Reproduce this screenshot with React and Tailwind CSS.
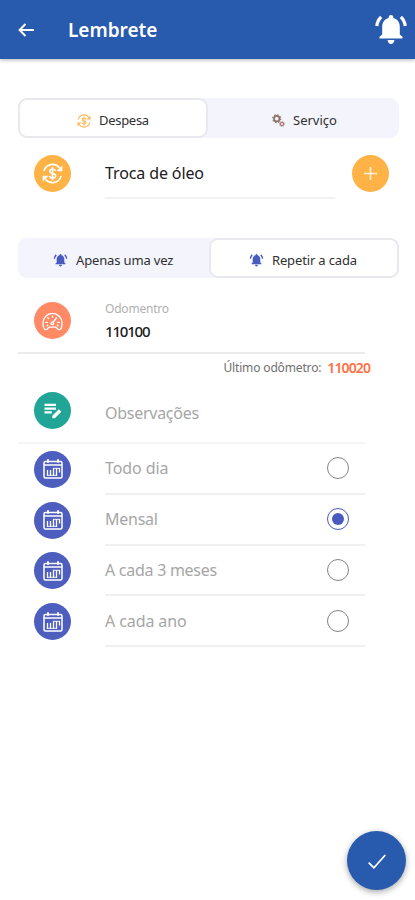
import { useState } from "react";
import clsx from "clsx";

function BellIcon({ className }) {
  return (
    <svg viewBox="0 0 32 30" className={className} fill="currentColor">
      <path d="M16 0c1.400 0 2.300.9 2.300 2.200v.7c4.200 1 6.500 4.500 6.500 9v7.600l2.700 2.300v1.800H4.500v-1.800l2.700-2.300v-7.600c0-4.500 2.300-8 6.500-9v-.7C13.700.9 14.600 0 16 0z" />
      <path d="M12.600 25h6.800c0 2.300-1.500 4-3.400 4s-3.400-1.700-3.400-4z" />
      <path d="M6.200 2C3.600 4.300 2.200 7.200 1.800 11M25.800 2c2.600 2.300 4 5.200 4.400 9" fill="none" stroke="currentColor" strokeWidth="3.200" />
    </svg>
  );
}

function MoneyCycleIcon({ className }) {
  return (
    <svg viewBox="0 0 22 22" className={className} fill="none" stroke="currentColor" strokeWidth="1.700">
      <path d="M2 8.500A9.300 9.300 0 0 1 18.300 5M20 13.500A9.300 9.300 0 0 1 3.700 17" />
      <path d="M21.300 2.500v6.200h-6.200zM.7 19.500v-6.200h6.200z" fill="currentColor" stroke="none" />
      <path d="M14.200 8.300c-.4-1.200-1.500-1.800-3.100-1.800-1.800 0-3 .8-3 2.100 0 3.100 6.200 1.600 6.200 4.800 0 1.400-1.400 2.200-3.200 2.200s-3-.7-3.300-2M11 4v14" />
    </svg>
  );
}

function GearsIcon({ className }) {
  return (
    <svg viewBox="0 0 12 12" className={className} fill="none">
      <circle cx="4.400" cy="4.300" r="2.500" stroke="#8d6e63" strokeWidth="1.600" />
      <circle cx="4.400" cy="4.300" r="3.700" stroke="#8d6e63" strokeWidth="1" strokeDasharray="1.450" />
      <circle cx="9.200" cy="9.200" r="1.500" stroke="#b07d75" strokeWidth="1.200" />
      <circle cx="9.200" cy="9.200" r="2.300" stroke="#b07d75" strokeWidth=".8" strokeDasharray=".9" />
    </svg>
  );
}

function GaugeIcon({ className }) {
  return (
    <svg viewBox="0 0 22 20" className={className} fill="none" stroke="currentColor" strokeWidth="1.400" strokeLinecap="round" strokeLinejoin="round">
      <path d="M4 18.600C1.800 18.600 1 15 1 11.500a10 10 0 0 1 20 0c0 3.500-.8 7.100-3 7.100-2.200 0-2-2.600-4-2.600H8c-2 0-1.800 2.600-4 2.600z" />
      <path d="M11 4.200v1.500M6 6l.9.9M4 11h1.500M16.500 11H18M5.200 14.300l.8-.5M16.800 14.300l-.8-.5" />
      <path d="M11.600 10.800l3.600-4.600" strokeWidth="1.600" />
      <circle cx="10.800" cy="12" r="1.300" />
    </svg>
  );
}

function NoteIcon({ className }) {
  return (
    <svg viewBox="0 0 18 16" className={className} fill="currentColor">
      <path d="M.5.800h11.500v2.300H.5zM.5 4.500h11.500v2.300H.5zM.5 8.200h7.300v2.300H.5z" />
      <path d="M8.300 12.700l6.500-6.500 2.500 2.500-6.500 6.500H8.300z" />
    </svg>
  );
}

function CalendarIcon({ className }) {
  return (
    <svg viewBox="0 0 20 20" className={className} fill="none" stroke="currentColor" strokeWidth="1.500">
      <rect x="1" y="2.500" width="18" height="16.500" rx="1.500" />
      <path d="M1 6h18" strokeWidth="1.500" />
      <path d="M5 .3v3.500M15 .3v3.500" strokeWidth="1.900" />
      {/* day cells */}
      <path d="M4.500 11v5.800M7.500 11v5.800M10.500 9v7.800M13.500 9v7.800M16.500 9v4.500" strokeWidth="1.300" />
      <path d="M3.900 16.300h10.200M10 9.300h7" strokeWidth=".9" />
    </svg>
  );
}

function Badge({ className, children }) {
  return (
    <div className={clsx("flex size-[37px] shrink-0 items-center justify-center rounded-full text-white", className)}>
      {children}
    </div>
  );
}

function Segmented({ items, value, onChange }) {
  return (
    <div className="ml-[18px] flex h-[40px] w-[381px] justify-between rounded-[9px] bg-[#f3f4fc]">
      {items.map(({ label, icon, pad }, i) => (
        <button
          key={label}
          onClick={() => onChange(i)}
          className={clsx(
            "flex w-[190px] items-center whitespace-nowrap rounded-[9px] border-2 pt-[5px] text-[13px] text-[#303030]",
            pad,
            value === i ? "border-[#e8e9ee] bg-white" : "border-transparent"
          )}
        >
          {icon}
          {label}
        </button>
      ))}
    </div>
  );
}

function Radio({ checked }) {
  return (
    <span className={clsx("flex size-[22px] items-center justify-center rounded-full border-[1.500px]", checked ? "border-[#4a5bc0]" : "border-[#858585]")}>
      {checked && <span className="size-3 rounded-full bg-[#4a5bc0]" />}
    </span>
  );
}

const periods = [
  { label: "Todo dia", tracking: "tracking-[-0.1px]" },
  { label: "Mensal", tracking: "tracking-[-0.25px]" },
  { label: "A cada 3 meses", tracking: "tracking-[-0.27px]" },
  { label: "A cada ano", tracking: "tracking-[-0.1px]" },
];

export default function App() {
  const [kind, setKind] = useState(0);
  const [repeat, setRepeat] = useState(1);
  const [period, setPeriod] = useState(1);

  return (
    <div className="relative h-[900px] w-[415px] overflow-hidden bg-white font-['Noto_Sans',sans-serif]">
      {/* Header */}
      <header className="flex h-[59px] items-center bg-[#285aad] text-white shadow-[0_1px_4px_rgba(0,0,0,0.3)]">
        <svg viewBox="0 0 16 14" className="ml-[18px] mt-px h-[14px] w-4" fill="none" stroke="currentColor" strokeWidth="2">
          <path d="M7.500 1L1.600 7l5.900 6M1.600 7H16" />
        </svg>
        <h1 className="ml-[34px] mt-px text-[19px] font-semibold leading-6">Lembrete</h1>
        <BellIcon className="ml-auto mr-2 h-[30px] w-8" />
      </header>

      <main>
        <div className="pt-[39px]">
          <Segmented
            value={kind}
            onChange={setKind}
            items={[
              { label: "Despesa", pad: "pl-[57px] tracking-[-0.3px]", icon: <MoneyCycleIcon className="mr-[8px] size-[14px] text-[#ffb74d]" /> },
              { label: "Serviço", pad: "pl-[61px]", icon: <GearsIcon className="mr-[8px] size-[13px]" /> },
            ]}
          />
        </div>

        <div className="mt-[17px] flex h-[44px] pl-[34px]">
          <Badge className="bg-[#ffb347]"><MoneyCycleIcon className="size-[21px]" /></Badge>
          <div className="ml-[34px] w-[230px] border-b-2 border-[#f2f2f2] pt-[6px] text-[16px] leading-6 tracking-[-0.12px] text-[#202020]">Troca de óleo</div>
          <Badge className="ml-[17px] bg-[#ffb347]">
            <svg viewBox="0 0 14 14" className="size-[13px]" stroke="#fff3dc" strokeWidth="1.700"><path d="M7 0v14M0 7h14" /></svg>
          </Badge>
        </div>

        <div className="mt-[39px]">
          <Segmented
            value={repeat}
            onChange={setRepeat}
            items={[
              { label: "Apenas uma vez", pad: "pl-[33px] tracking-[-0.15px]", icon: <BellIcon className="mr-[8px] h-[13px] w-[15px] text-[#4a5bc0]" /> },
              { label: "Repetir a cada", pad: "pl-[38px] tracking-[-0.15px]", icon: <BellIcon className="mr-[8px] h-[13px] w-[15px] text-[#4a5bc0]" /> },
            ]}
          />
        </div>

        {/* Odometer */}
        <div className="ml-[18px] mt-[24px] flex h-[52px] w-[347px] border-b-2 border-[#ebebeb] pl-[16px]">
          <Badge className="bg-[#ff8a65]"><GaugeIcon className="mt-[2px] h-[19px] w-[21px]" /></Badge>
          <div className="ml-[34px]">
            <div className="text-[12px] leading-[14px] tracking-[-0.2px] text-[#b0b0b0]">Odomentro</div>
            <div className="mt-[4px] text-[15px] font-medium leading-[22px] tracking-[-1.2px] text-[#202020]">110100</div>
          </div>
        </div>
        <div className="flex h-[38px] justify-end pr-[45px] pt-[5px] text-[12px] leading-[18px] tracking-[-0.15px] text-[#707070]">
          Último odômetro: <span className="ml-[6px] text-[14px] font-semibold tracking-[-0.9px] text-[#ff7043]">110020</span>
        </div>

        <div className="ml-[18px] flex h-[52px] w-[347px] border-b-2 border-[#f5f5f5] pl-[16px]">
          <Badge className="bg-[#20a596]"><NoteIcon className="h-[16px] w-[18px]" /></Badge>
          <div className="ml-[34px] pt-[9px] text-[16px] leading-6 tracking-[-0.27px] text-[#a6a6a6]">Observações</div>
        </div>

        {/* Repeat period */}
        {periods.map(({ label, tracking }, i) => (
          <button key={label} onClick={() => setPeriod(i)} className="flex h-[50.8px] w-full items-center pl-[34px] text-left">
            <Badge className="bg-[#4d5ebf]"><CalendarIcon className="size-5" /></Badge>
            <span className="ml-[34px] flex h-full w-[260px] items-center justify-between border-b-2 border-[#f0f0f0] pr-4">
              <span className={clsx("text-[16px] leading-6 text-[#a6a6a6]", tracking)}>{label}</span>
              <Radio checked={period === i} />
            </span>
          </button>
        ))}
      </main>

      <button className="absolute bottom-[10px] right-[9px] flex size-[59px] items-center justify-center rounded-full bg-[#285aad] shadow-[0_2px_6px_rgba(0,0,0,0.35)]">
        <svg viewBox="0 0 18 15" className="mt-px h-[15px] w-[18px]" fill="none" stroke="white" strokeWidth="1.700"><path d="M.7 8.600l5.200 5.200L17.300 1" /></svg>
      </button>
    </div>
  );
}
